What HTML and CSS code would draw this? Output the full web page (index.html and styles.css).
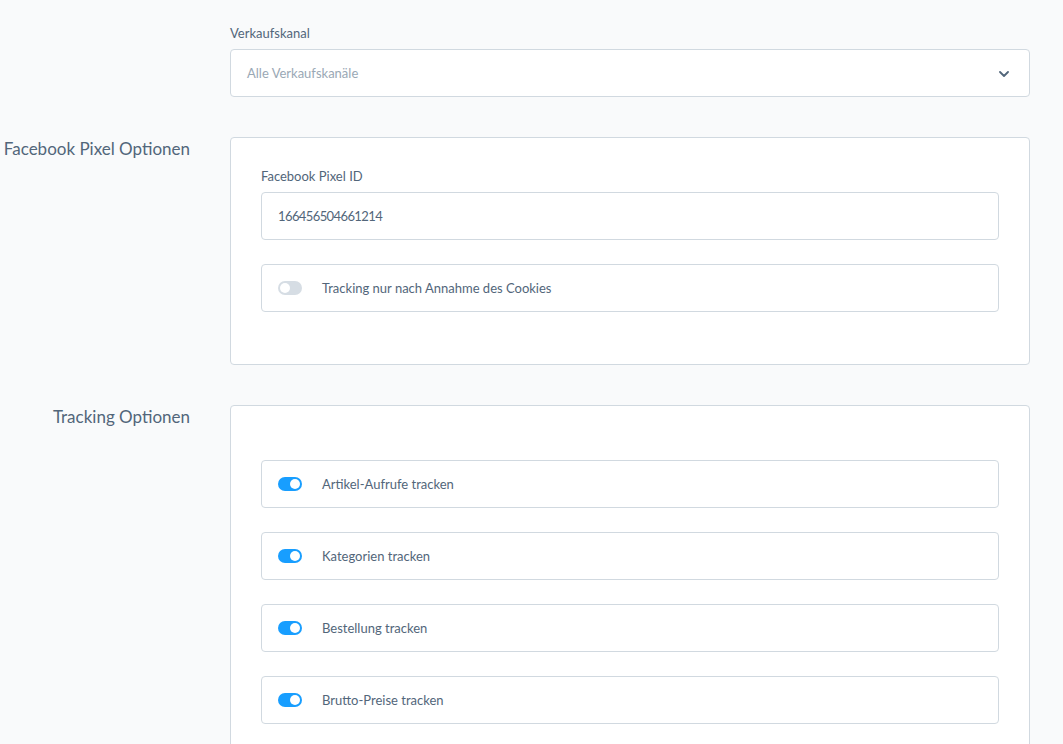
FILE: index.html
```html
<!DOCTYPE html>
<html lang="de">
<head>
<meta charset="utf-8">
<title>Facebook Pixel</title>
<link rel="stylesheet" href="styles.css">
</head>
<body>
<div class="page">
  <div class="section">
    <div class="section-title"></div>
    <div class="plain">
      <div class="label">Verkaufskanal</div>
      <div class="field select">
        <span class="placeholder">Alle Verkaufskanäle</span>
        <svg class="chevron" width="10" height="6" viewBox="0 0 10 6"><path d="M1 1 L5 5 L9 1" fill="none" stroke="#52667a" stroke-width="1.8" stroke-linecap="round" stroke-linejoin="round"/></svg>
      </div>
    </div>
  </div>

  <div class="section">
    <div class="section-title">Facebook Pixel Optionen</div>
    <div class="card card-pixel">
      <div class="label label-card">Facebook Pixel ID</div>
      <div class="field input"><span class="value">166456504661214</span></div>
      <div class="field switch-row last">
        <span class="toggle"></span>
        <span class="switch-label">Tracking nur nach Annahme des Cookies</span>
      </div>
    </div>
  </div>

  <div class="section">
    <div class="section-title">Tracking Optionen</div>
    <div class="card card-tracking">
      <div class="field switch-row"><span class="toggle on"></span><span class="switch-label">Artikel-Aufrufe tracken</span></div>
      <div class="field switch-row"><span class="toggle on"></span><span class="switch-label">Kategorien tracken</span></div>
      <div class="field switch-row"><span class="toggle on"></span><span class="switch-label">Bestellung tracken</span></div>
      <div class="field switch-row"><span class="toggle on"></span><span class="switch-label">Brutto-Preise tracken</span></div>
    </div>
  </div>
</div>
</body>
</html>
```

FILE: styles.css
```css
html, body {
  margin: 0;
  padding: 0;
  background: #f9fafb;
  font-family: Lato, "Open Sans", sans-serif;
  color: #52667a;
  overflow: hidden;
  height: 744px;
}

.page {
  padding-top: 23px;
  display: flex;
  flex-direction: column;
  gap: 40px;
}

.section {
  display: grid;
  grid-template-columns: 190px 800px;
  column-gap: 40px;
}

.section-title {
  text-align: right;
  font-size: 17px;
  line-height: 24px;
  color: #52667a;
  white-space: nowrap;
}

.label {
  font-size: 13px;
  line-height: 20px;
  color: #52667a;
  margin-bottom: 6px;
}

.label-card {
  line-height: 16px;
  margin-bottom: 8px;
}

.field {
  box-sizing: border-box;
  height: 48px;
  background: #fff;
  border: 1px solid #d1d9e0;
  border-radius: 4px;
  display: flex;
  align-items: center;
  padding: 0 16px;
  font-size: 13px;
}

.select {
  justify-content: space-between;
  padding-right: 20px;
}

.placeholder {
  color: #9aa8b5;
}

.chevron {
  display: block;
  margin-top: 1px;
}

.value {
  color: #52667a;
  font-size: 13px;
  letter-spacing: -0.6px;
}

.card {
  box-sizing: border-box;
  background: #fff;
  border: 1px solid #d1d9e0;
  border-radius: 4px;
  padding: 30px;
  display: flex;
  flex-direction: column;
}

.card-pixel .input {
  margin-bottom: 24px;
}

.card-pixel .last {
  margin-bottom: 22px;
}

.card-tracking {
  padding-top: 54px;
  gap: 24px;
}

.toggle {
  position: relative;
  width: 24px;
  height: 14px;
  border-radius: 7px;
  background: #d6dde4;
  flex: none;
}

.toggle::after {
  content: "";
  position: absolute;
  top: 2px;
  left: 2px;
  width: 10px;
  height: 10px;
  border-radius: 50%;
  background: #fff;
}

.toggle.on {
  background: #189eff;
}

.toggle.on::after {
  left: 12px;
}

.switch-label {
  margin-left: 20px;
  color: #52667a;
}
```
